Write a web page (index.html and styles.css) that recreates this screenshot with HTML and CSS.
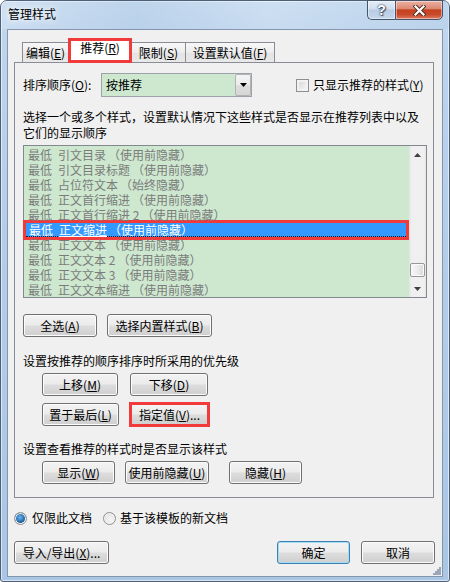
FILE: index.html
```html
<!DOCTYPE html>
<html lang="zh-CN">
<head>
<meta charset="utf-8">
<title>管理样式</title>
<link rel="stylesheet" href="styles.css">
</head>
<body>
<div class="window">
  <div class="titlebar">
    <span class="title">管理样式</span>
    <div class="caption">
      <div class="cap-btn cap-help">?</div>
      <div class="cap-btn cap-close">
        <svg width="13" height="11" viewBox="0 0 13 11"><path d="M2.5 1.5 L10.5 9.5 M10.5 1.5 L2.5 9.5" stroke="#4a2a22" stroke-width="4" stroke-linecap="square" fill="none"/><path d="M2.5 1.5 L10.5 9.5 M10.5 1.5 L2.5 9.5" stroke="#ffffff" stroke-width="2.2" stroke-linecap="square" fill="none"/></svg>
      </div>
    </div>
  </div>
  <div class="client">
    <div class="tabstrip">
      <div class="tab tab-edit">编辑(<u>E</u>)</div>
      <div class="tab tab-active">推荐(<u>R</u>)</div>
      <div class="tab tab-limit">限制(<u>S</u>)</div>
      <div class="tab tab-default">设置默认值(<u>F</u>)</div>
    </div>
    <div class="panel">
      <div class="sort-row">
        <span class="sort-label">排序顺序(<u>O</u>):</span>
        <div class="combo">
          <span class="combo-text">按推荐</span>
          <span class="combo-btn"><svg width="7" height="4" viewBox="0 0 7 4"><path d="M0 0 H7 L3.5 4 Z" fill="#000"/></svg></span>
        </div>
        <div class="check"><span class="checkbox"></span><span>只显示推荐的样式(<u>Y</u>)</span></div>
      </div>
      <p class="desc">选择一个或多个样式，设置默认情况下这些样式是否显示在推荐列表中以及<br>它们的显示顺序</p>
      <div class="listbox">
        <div class="list-items">
          <div class="row"><span>最低</span><span class="nm">引文目录</span><span class="st">（使用前隐藏）</span></div>
          <div class="row"><span>最低</span><span class="nm">引文目录标题</span><span class="st">（使用前隐藏）</span></div>
          <div class="row"><span>最低</span><span class="nm">占位符文本</span><span class="st">（始终隐藏）</span></div>
          <div class="row"><span>最低</span><span class="nm">正文首行缩进</span><span class="st">（使用前隐藏）</span></div>
          <div class="row"><span>最低</span><span class="nm">正文首行缩进 2</span><span class="st">（使用前隐藏）</span></div>
          <div class="row sel"><div class="sel-inner"><span>最低</span><span class="nm ul">正文缩进</span><span class="st">（使用前隐藏）</span></div></div>
          <div class="row"><span>最低</span><span class="nm">正文文本</span><span class="st">（使用前隐藏）</span></div>
          <div class="row"><span>最低</span><span class="nm">正文文本 2</span><span class="st">（使用前隐藏）</span></div>
          <div class="row"><span>最低</span><span class="nm">正文文本 3</span><span class="st">（使用前隐藏）</span></div>
          <div class="row"><span>最低</span><span class="nm">正文文本缩进</span><span class="st">（使用前隐藏）</span></div>
        </div>
        <div class="vscroll">
          <div class="sb-arrow"><svg width="7" height="4" viewBox="0 0 7 4"><path d="M3.5 0 L7 4 H0 Z" fill="#404040"/></svg></div>
          <div class="sb-track"><div class="sb-thumb"></div></div>
          <div class="sb-arrow"><svg width="7" height="4" viewBox="0 0 7 4"><path d="M0 0 H7 L3.5 4 Z" fill="#404040"/></svg></div>
        </div>
      </div>
      <div class="btn-row row-select">
        <div class="btn w-all">全选(<u>A</u>)</div>
        <div class="btn w-builtin">选择内置样式(<u>B</u>)</div>
      </div>
      <p class="section-text first">设置按推荐的顺序排序时所采用的优先级</p>
      <div class="btn-row indent row-move">
        <div class="btn w-up">上移(<u>M</u>)</div>
        <div class="btn w-down">下移(<u>D</u>)</div>
      </div>
      <div class="btn-row indent row-last">
        <div class="btn w-last">置于最后(<u>L</u>)</div>
        <div class="btn marked">指定值(<u>V</u>)...</div>
      </div>
      <p class="section-text second">设置查看推荐的样式时是否显示该样式</p>
      <div class="btn-row indent row-show">
        <div class="btn w-show">显示(<u>W</u>)</div>
        <div class="btn w-hideuse">使用前隐藏(<u>U</u>)</div>
        <div class="btn w-hide">隐藏(<u>H</u>)</div>
      </div>
    </div>
    <div class="scope">
      <span class="radio checked"></span><span class="radio-label">仅限此文档</span>
      <span class="radio second-radio"></span><span class="radio-label">基于该模板的新文档</span>
    </div>
    <div class="footer">
      <div class="btn w-import">导入/导出(<u>X</u>)...</div>
      <div class="btn default w-ok">确定</div>
      <div class="btn w-cancel">取消</div>
    </div>
    <svg class="grip" width="10" height="10" viewBox="0 0 10 10">
      <g fill="#9aa7b8"><rect x="8" y="2" width="2" height="2"/><rect x="6" y="4" width="2" height="2"/><rect x="8" y="4" width="2" height="2"/><rect x="4" y="6" width="2" height="2"/><rect x="6" y="6" width="2" height="2"/><rect x="8" y="6" width="2" height="2"/><rect x="2" y="8" width="2" height="2"/><rect x="4" y="8" width="2" height="2"/><rect x="6" y="8" width="2" height="2"/><rect x="8" y="8" width="2" height="2"/></g>
    </svg>
  </div>
</div>
</body>
</html>
```

FILE: styles.css
```css
* { box-sizing: border-box; }
html, body { margin: 0; padding: 0; }
body {
  background: #ffffff;
  font-family: "Noto Sans CJK SC", "Noto Sans", sans-serif;
  font-size: 12px;
  line-height: 16px;
  color: #000;
}
u { text-decoration: underline; text-underline-offset: 1px; }
p { margin: 0; }

.window {
  width: 450px;
  height: 582px;
  display: flex;
  flex-direction: column;
  border: 1px solid #4e6078;
  border-radius: 7px 7px 3px 3px;
  background: linear-gradient(180deg, #c8dcf1 0%, #bdd4ed 8%, #b4cde9 40%, #aac6e5 100%);
  box-shadow: inset 0 0 0 1px rgba(255,255,255,0.55);
}

.titlebar {
  height: 28px;
  display: flex;
  justify-content: space-between;
  align-items: flex-start;
  padding-left: 7px;
  background: linear-gradient(90deg, rgba(255,255,255,0.15), rgba(160,190,220,0.25) 30%, rgba(255,255,255,0.1) 60%, rgba(170,200,225,0.3));
}
.title {
  margin-top: 5px;
  line-height: 16px;
  text-shadow: 0 0 6px rgba(255,255,255,0.95), 0 0 10px rgba(255,255,255,0.8);
}
.caption {
  display: flex;
  margin-top: -1px;
  margin-right: 6px;
}
.cap-btn {
  height: 20px;
  display: flex;
  align-items: center;
  justify-content: center;
  border: 1px solid #44546a;
  box-shadow: inset 0 0 0 1px rgba(255,255,255,0.45);
}
.cap-help {
  width: 28px;
  border-right: none;
  border-radius: 0 0 0 5px;
  background: linear-gradient(180deg, #e4edf7 0%, #cfdeee 45%, #b7cce3 50%, #c6d8ec 100%);
  color: #fff;
  font-family: "Liberation Sans", Arial, sans-serif;
  font-weight: bold;
  font-size: 14px;
  text-shadow: 0 0 1px #2c3a4c, 0 0 2px #2c3a4c, 1px 1px 1px #4c5a6c;
}
.cap-close {
  width: 48px;
  border-radius: 0 0 5px 0;
  background: linear-gradient(180deg, #eab1a3 0%, #dd8a73 42%, #c5401f 50%, #c84a2b 75%, #de7c5f 100%);
}

.client {
  flex: 1;
  margin: 0 6px 4px 6px;
  border: 1px solid #8496ad;
  background: #f0f0f0;
  display: flex;
  flex-direction: column;
  position: relative;
}

.tabstrip {
  margin-top: 8px;
  height: 24px;
  display: flex;
  align-items: flex-end;
  padding-left: 14px;
}
.tab {
  height: 20px;
  display: flex;
  align-items: center;
  justify-content: center;
  border: 1px solid #898c95;
  border-bottom: none;
  background: linear-gradient(180deg, #f7f7f7 0%, #ededed 50%, #e3e3e3 52%, #e9e9e9 100%);
  white-space: nowrap;
}
.tab-edit { width: 46px; border-right: none; }
.tab-limit { width: 54px; border-left: none; }
.tab-default { width: 90px; margin-left: -1px; }
.tab-active {
  width: 64px;
  height: 25px;
  margin-bottom: -1px;
  position: relative;
  z-index: 1;
  border: 3px solid #f23a3a;
  background: #ffffff;
  align-items: flex-start;
  line-height: 14px;
}

.panel {
  margin-left: 6px;
  width: 420px;
  height: 436px;
  border: 1px solid #898c95;
  padding: 0 6px 0 8px;
  background: #f0f0f0;
}

.sort-row {
  margin-top: 10px;
  height: 24px;
  display: flex;
  align-items: center;
}
.sort-label { width: 78px; white-space: nowrap; }
.combo {
  width: 151px;
  height: 24px;
  border: 1px solid #9ea2aa;
  background: #cde8cf;
  display: flex;
  align-items: center;
  justify-content: space-between;
  padding: 0 0 0 4px;
}
.combo-btn {
  width: 16px;
  height: 22px;
  border: 1px solid #b3b3b3;
  border-radius: 2px;
  background: linear-gradient(180deg, #f4f4f4 0%, #ececec 50%, #dedede 52%, #d6d6d6 100%);
  display: flex;
  align-items: center;
  justify-content: center;
}
.check {
  margin-left: 44px;
  display: flex;
  align-items: center;
  gap: 4px;
  white-space: nowrap;
}
.checkbox {
  width: 13px;
  height: 13px;
  border: 1px solid #8e8f8f;
  background: linear-gradient(135deg, #d4d4d4 0%, #f9f9f9 100%);
  box-shadow: inset 0 0 0 2px #f2f2f2;
}

.desc { margin-top: 12px; line-height: 16px; }

.listbox {
  margin-top: 4px;
  width: 404px;
  height: 153px;
  border: 1px solid #828790;
  background: #cde8cf;
  display: flex;
}
.list-items {
  flex: 1;
  padding-top: 1px;
}
.row {
  height: 15px;
  line-height: 15px;
  padding-left: 4px;
  color: #7b7b7b;
  white-space: nowrap;
}
.nm { margin-left: 6px; }
.st { margin-left: 2px; }
.row.sel {
  height: 20px;
  margin: -2px 0 -3px -1px;
  border: 3px solid #f23a3a;
  background: #3399ff;
  color: #ffffff;
  padding-left: 0;
}
.sel-inner {
  height: 14px;
  line-height: 13px;
  padding-left: 3px;
  border-bottom: 1px dotted #1a1a1a;
}
.ul { text-decoration: underline; text-underline-offset: 1px; }

.vscroll {
  width: 17px;
  display: flex;
  flex-direction: column;
  background: linear-gradient(90deg, #e2e2e2 0%, #efefef 15%, #f0f0f0 85%, #e6e6e6 100%);
}
.sb-arrow {
  height: 17px;
  display: flex;
  align-items: center;
  justify-content: center;
}
.sb-track { flex: 1; padding: 0 1px; }
.sb-thumb {
  margin-top: 100px;
  height: 14px;
  border: 1px solid #979797;
  border-radius: 2px;
  background: linear-gradient(90deg, #f7f7f7 0%, #ececec 50%, #d8d8d8 100%);
  box-shadow: inset 0 0 0 1px #fbfbfb;
}

.btn-row { display: flex; align-items: center; }
.btn-row.indent { padding-left: 19px; }
.row-select { margin-top: 16px; gap: 10px; }
.row-move { margin-top: 4px; gap: 12px; }
.row-last { margin-top: 7px; gap: 10px; }
.row-show { margin-top: 4px; }
.section-text.first { margin-top: 16px; }
.section-text.second { margin-top: 15px; }

.btn {
  height: 23px;
  border: 1px solid #707070;
  border-radius: 3px;
  background: linear-gradient(180deg, #f3f3f3 0%, #ebebeb 48%, #dddddd 52%, #cfcfcf 100%);
  box-shadow: inset 0 0 0 1px #fcfcfc;
  display: flex;
  align-items: center;
  justify-content: center;
  white-space: nowrap;
  line-height: 16px;
}
.w-all { width: 74px; }
.w-builtin { width: 105px; }
.w-up { width: 76px; }
.w-down { width: 78px; }
.w-last { width: 77px; }
.btn.marked {
  width: 81px;
  height: 25px;
  margin: -1px 0;
  border: 3px solid #f23a3a;
  border-radius: 0;
  box-shadow: none;
}
.w-show { width: 73px; }
.w-hideuse { width: 84px; margin-left: 10px; }
.w-hide { width: 73px; margin-left: 20px; }

.scope {
  margin-top: 12px;
  height: 16px;
  padding-left: 6px;
  display: flex;
  align-items: center;
}
.radio {
  width: 13px;
  height: 13px;
  border-radius: 50%;
  border: 1px solid #8e8f8f;
  background: radial-gradient(circle at 60% 60%, #f6f6f6 0%, #dcdcdc 100%);
  box-shadow: inset 0 0 0 1px #f4f4f4;
}
.radio.checked {
  background: radial-gradient(circle at 45% 40%, #6fb6ea 0%, #2a73b8 45%, #184f86 62%, #e8e8e8 66%, #f4f4f4 100%);
}
.radio-label { margin-left: 5px; }
.second-radio { margin-left: 11px; }
.scope .radio-label:last-child { margin-left: 4px; }

.footer {
  margin-top: 15px;
  display: flex;
  padding: 0 7px 0 6px;
}
.w-import { width: 95px; }
.w-ok { width: 73px; margin-left: auto; }
.w-cancel { width: 74px; margin-left: 11px; }
.btn.default {
  border-color: #3c7fb1;
  box-shadow: inset 0 0 0 1px #a7dcf5;
}

.grip {
  position: absolute;
  right: 1px;
  bottom: 1px;
}
```
